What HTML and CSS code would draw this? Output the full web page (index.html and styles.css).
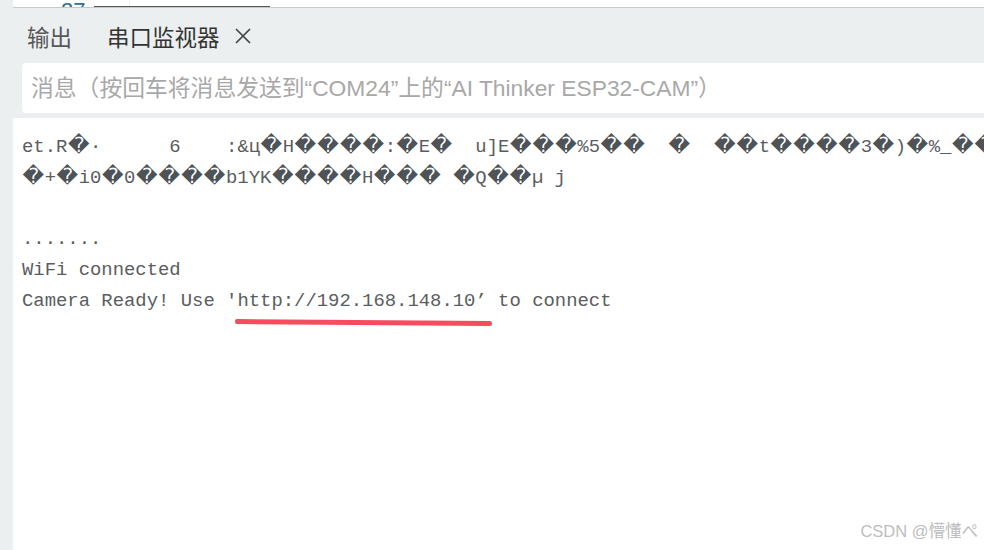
FILE: index.html
```html
<!doctype html>
<html lang="zh-CN">
  <head>
    <meta charset="UTF-8" />
    <meta name="viewport" content="width=device-width, initial-scale=1.0" />
    <title>串口监视器</title>
    <link rel="stylesheet" href="styles.css">
  </head>
  <body>
    <div class="app">
      <div class="editor-edge">
        <div class="gutter"><span class="line-no">27</span></div>
        <div class="code"></div>
        <div class="scroll-thumb"></div>
      </div>

      <div class="tabs">
        <span class="tab">输出</span>
        <span class="tab active">
          串口监视器
          <svg class="tab-close" width="18" height="18" viewBox="0 0 18 18">
            <path d="M2 2 L16 16 M16 2 L2 16" />
          </svg>
        </span>
      </div>

      <div class="send-box">
        <input type="text" placeholder="消息（按回车将消息发送到“COM24”上的“AI Thinker ESP32-CAM”）" />
      </div>

      <div class="output">
<pre class="log">et.R<span class="bad">�</span>·      6    :&amp;ц<span class="bad">�</span>H<span class="bad">�</span><span class="bad">�</span><span class="bad">�</span><span class="bad">�</span>:<span class="bad">�</span>E<span class="bad">�</span>  u]E<span class="bad">�</span><span class="bad">�</span><span class="bad">�</span>%5<span class="bad">�</span><span class="bad">�</span>  <span class="bad">�</span>  <span class="bad">�</span><span class="bad">�</span>t<span class="bad">�</span><span class="bad">�</span><span class="bad">�</span><span class="bad">�</span>3<span class="bad">�</span>)<span class="bad">�</span>%_<span class="bad">�</span><span class="bad">�</span>*<span class="bad">�</span>
<span class="bad">�</span>+<span class="bad">�</span>i0<span class="bad">�</span>0<span class="bad">�</span><span class="bad">�</span><span class="bad">�</span><span class="bad">�</span>b1YK<span class="bad">�</span><span class="bad">�</span><span class="bad">�</span><span class="bad">�</span>H<span class="bad">�</span><span class="bad">�</span><span class="bad">�</span> <span class="bad">�</span>Q<span class="bad">�</span><span class="bad">�</span>µ j

.......
WiFi connected
Camera Ready! Use 'http://192.168.148.10’ to connect</pre>
        <div class="mark"></div>
        <div class="watermark">CSDN @懵懂ぺ</div>
      </div>
    </div>
  </body>
</html>
```

FILE: styles.css
```css
* {
  box-sizing: border-box;
  margin: 0;
  padding: 0;
}

html,
body {
  height: 100%;
}

body {
  background: #ebeff0;
  font-family: "Liberation Sans", "Noto Sans CJK SC", sans-serif;
  overflow: hidden;
}

.app {
  display: flex;
  flex-direction: column;
  height: 100vh;
}

/* bottom edge of the editor above the panel */
.editor-edge {
  position: relative;
  display: flex;
  height: 8px;
  margin-left: 13px;
  background: #fff;
  border-bottom: 1px solid #c9c9c9;
  overflow: hidden;
}

.gutter {
  display: flex;
  align-items: flex-end;
  width: 117px;
  padding-left: 48px;
  border-right: 1px solid #eef0f1;
}

.line-no {
  margin-bottom: -15px;
  font-size: 22px;
  line-height: 22px;
  color: #2f6f93;
}

.code {
  flex: 1;
}

.scroll-thumb {
  position: absolute;
  left: 81px;
  bottom: -1px;
  width: 176px;
  height: 2px;
  background: #555;
}

.tabs {
  display: flex;
  align-items: center;
  gap: 35px;
  height: 55px;
  padding: 1px 0 0 27px;
  font-family: "Noto Sans CJK SC", sans-serif;
  font-size: 22.5px;
}

.tab {
  display: flex;
  align-items: center;
  color: #585858;
}

.tab.active {
  color: #333;
}

.tab-close {
  margin-left: 14px;
  fill: none;
  stroke: #444;
  stroke-width: 1.7;
}

.send-box {
  height: 50px;
  margin-left: 22px;
  background: #fff;
  border-radius: 4px 0 0 4px;
}

.send-box input {
  width: 100%;
  height: 100%;
  padding-left: 9px;
  border: none;
  outline: none;
  background: transparent;
  font-family: "Liberation Sans", "Noto Sans CJK SC", sans-serif;
  font-size: 22.8px;
}

.send-box input::placeholder {
  color: #a8a8a8;
}

.output {
  position: relative;
  flex: 1;
  margin: 5px 0 0 13px;
  background: #fff;
  overflow: hidden;
}

.log {
  padding: 14px 0 0 9px;
  font-family: "Liberation Mono", monospace;
  font-size: 18.9px;
  line-height: 30.8px;
  color: #5a5d5f;
  white-space: pre;
}

.bad {
  display: inline-block;
  width: 22.66px;
  font-family: "DejaVu Sans", sans-serif;
  font-size: 21px;
  line-height: 18px;
  text-align: center;
  color: #4d5356;
}

/* hand drawn highlight under the address */
.mark {
  position: absolute;
  left: 222px;
  top: 202px;
  width: 257px;
  height: 5px;
  background: #f74c5f;
  border-radius: 2px;
  transform: rotate(0.45deg);
}

.watermark {
  position: absolute;
  right: 6px;
  bottom: 8px;
  font-size: 16.5px;
  color: #bdbdbd;
}
```
